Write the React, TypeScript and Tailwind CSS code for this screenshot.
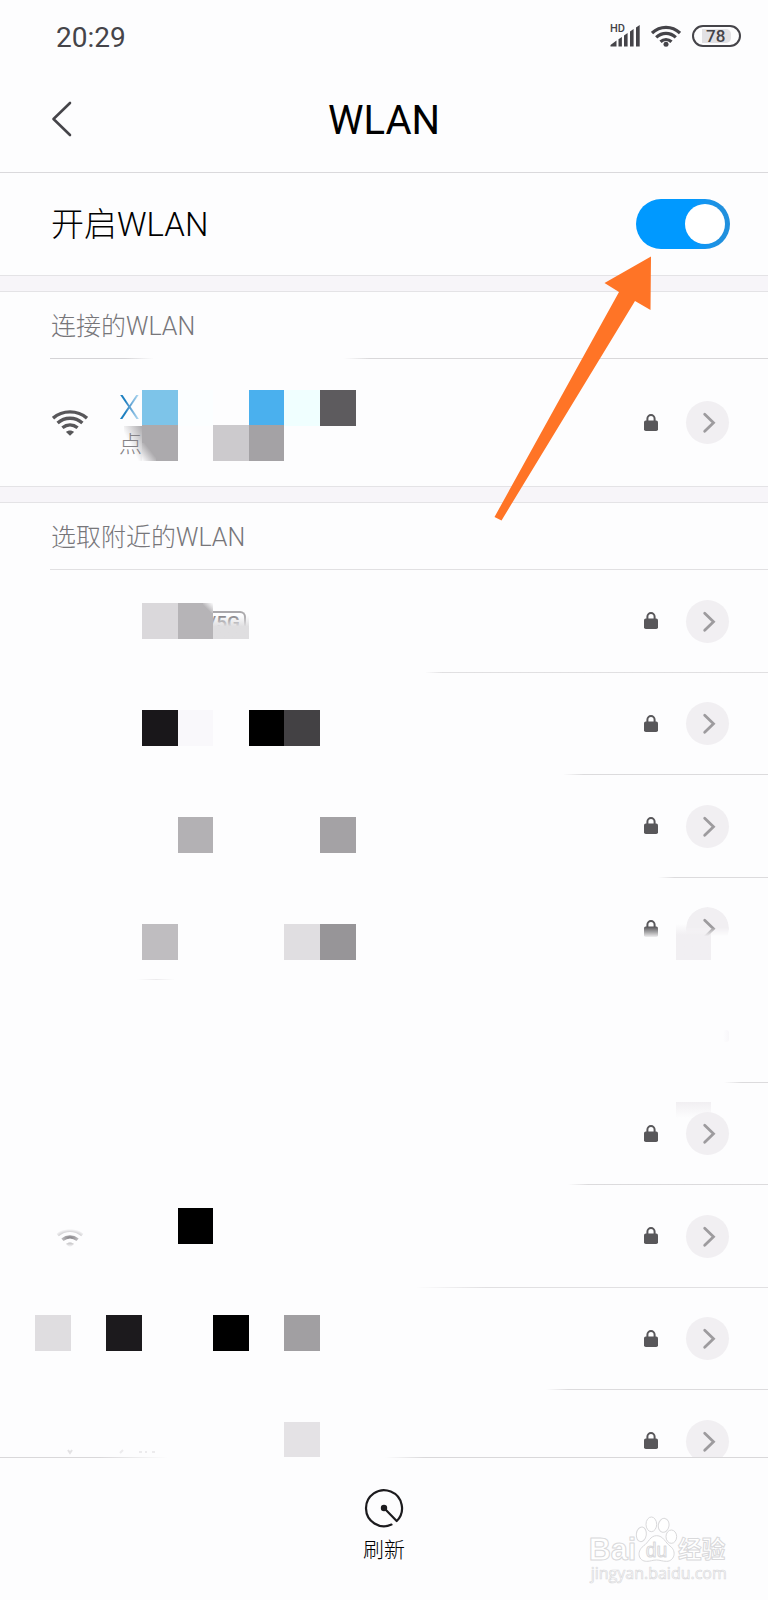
import React, { useState } from "react";

type Cell = [col: number, color: string];

type Network = {
  lineClass: string;
  mosaicTop?: string;
  cells?: Cell[];
  locked: boolean;
  faded?: boolean;
  extra?: React.ReactNode;
};

const CELL = 35.6;

/* A strip of privacy blocks laid over a network's name. */
function Mosaic({ cells, topClass }: { cells: Cell[]; topClass: string }) {
  return (
    <svg
      className={`pointer-events-none absolute left-[35px] ${topClass}`}
      width="680"
      height="36"
      shapeRendering="crispEdges"
      aria-hidden="true"
    >
      {cells.map(([col, color]) => {
        const x = Math.round(col * CELL + 0.2);
        const end = Math.round((col + 1) * CELL + 0.2);
        return <rect key={col} x={x} y="0" width={end - x} height="36" fill={color} />;
      })}
    </svg>
  );
}

function WifiIcon({ className, color = "#58575a" }: { className?: string; color?: string }) {
  return (
    <svg className={className} width="36" height="26" viewBox="0 0 36 26" fill="none" aria-hidden="true">
      <g stroke={color} strokeWidth="3.4">
        <path d="M1 8.2C10.5 -.2 25.5 -.2 35 8.2" />
        <path d="M5.6 13C12.8 6.6 23.2 6.6 30.4 13" />
        <path d="M10.4 17.8C15 14 21 14 25.600 17.8" />
      </g>
      <path d="M14 22C16 20 20 20 22 22L18 25.8Z" fill={color} />
    </svg>
  );
}

function LockIcon({ faded }: { faded?: boolean }) {
  return (
    <svg
      className={faded ? "[mask-image:linear-gradient(to_bottom,black_38%,transparent_100%)]" : ""}
      width="14"
      height="18"
      viewBox="0 0 14 18"
      aria-hidden="true"
    >
      <path d="M3.400 8V4.800a3.600 3.700 0 0 1 7.200 0V8" fill="none" stroke="#58575a" strokeWidth="2" />
      <rect x="0" y="6.500" width="14" height="10.500" rx="1.800" fill="#58575a" />
    </svg>
  );
}

function DetailButton({ faded }: { faded?: boolean }) {
  return (
    <button
      type="button"
      aria-label="详情"
      className={
        faded
          ? "flex size-[43px] shrink-0 items-center justify-center rounded-full bg-[#f1eff2] [mask-image:linear-gradient(to_bottom,black_48%,transparent_68%)]"
          : "flex size-[43px] shrink-0 items-center justify-center rounded-full bg-[#f1eff2]"
      }
    >
      <svg width="43" height="43" viewBox="0 0 43 43" fill="none" aria-hidden="true">
        <path d="M18.700 13.200L27.500 21.700L18.700 30.200" stroke="#9d9b9e" strokeWidth="2.800" strokeLinecap="round" strokeLinejoin="miter" />
      </svg>
    </button>
  );
}

function Trailing({ faded }: { faded?: boolean }) {
  return (
    <div className="relative ml-auto flex items-center gap-7 pr-[39px]">
      <LockIcon faded={faded} />
      <DetailButton faded={faded} />
    </div>
  );
}

function SectionTitle({ children, lineClass }: { children: React.ReactNode; lineClass: string }) {
  return (
    <>
      <h2 className="flex h-[66px] items-center pt-1 pl-[51px] text-[25px] font-light text-[#77767a]">{children}</h2>
      <div className={`ml-[50px] h-px ${lineClass}`} />
    </>
  );
}

const networks: Network[] = [
  {
    lineClass: "ml-[425px] bg-linear-to-r from-transparent to-[#e1e0e2] to-5%",
    mosaicTop: "top-[33px]",
    cells: [
      [3, "#dad8db"],
      [4, "#b6b4b7"],
    ],
    locked: true,
    extra: (
      <>
        <span className="absolute top-[33px] left-[203px] z-10 h-[10px] w-[10px] bg-linear-to-tr from-transparent from-40% to-[#fdfdfe]" />
        <span className="absolute top-[33px] left-[213px] flex h-9 w-9 overflow-hidden">
          <span className="mt-2 flex h-7 w-[33px] justify-end rounded-tr-md border-t-2 border-r-2 border-[#aaa8ab] pr-1 text-[19px] leading-5 font-medium whitespace-nowrap text-[#858387]">
            /5G
          </span>
          <span className="absolute inset-0 bg-linear-to-b from-transparent from-35% to-[#dfdee0] to-65%" />
        </span>
      </>
    ),
  },
  {
    lineClass: "ml-[563px] bg-linear-to-r from-transparent to-[#dcdbdd] to-10%",
    mosaicTop: "top-[37px]",
    cells: [
      [3, "#19171a"],
      [4, "#f9f8fb"],
      [6, "#000000"],
      [7, "#434144"],
    ],
    locked: true,
  },
  {
    lineClass: "ml-[658px] bg-linear-to-r from-transparent to-[#dcdbdd] to-15%",
    mosaicTop: "top-[42px]",
    cells: [
      [4, "#b3b1b4"],
      [8, "#a4a2a5"],
    ],
    locked: true,
  },
  {
    lineClass: "ml-[137px] w-[38px] bg-linear-to-r from-transparent via-[#ecebed] to-transparent",
    mosaicTop: "top-[46px]",
    cells: [
      [3, "#bfbdc0"],
      [7, "#e0dee1"],
      [8, "#979598"],
    ],
    locked: true,
    faded: true,
    extra: (
      <span className="absolute top-[46px] right-[57px] h-9 w-[35px] bg-linear-to-b from-transparent to-[#f1eff2] to-30%" />
    ),
  },
  {
    lineClass: "ml-[724px] bg-linear-to-r from-transparent to-[#dcdbdd] to-40%",
    locked: false,
    extra: (
      <span className="absolute top-[50px] right-[39px] h-3 w-1.5 rounded-full bg-linear-to-r from-transparent to-[#f8f7fa]" />
    ),
  },
  {
    lineClass: "ml-[568px] bg-linear-to-r from-transparent to-[#dcdbdd] to-10%",
    locked: true,
    extra: (
      <span className="absolute top-[19px] right-[57px] h-4 w-[35px] bg-linear-to-b from-[#f1eff2] to-transparent" />
    ),
  },
  {
    lineClass: "ml-[415px] bg-linear-to-r from-transparent to-[#e1e0e2] to-20%",
    mosaicTop: "top-[23px]",
    cells: [[4, "#000000"]],
    locked: true,
    extra: (
      <WifiIcon
        color="#8e8c90"
        className="absolute top-[37px] left-[52px] [mask-image:radial-gradient(ellipse_17px_9px_at_18px_16px,black_10%,transparent)]"
      />
    ),
  },
  {
    lineClass: "ml-[546px] bg-linear-to-r from-transparent to-[#dcdbdd] to-10%",
    mosaicTop: "top-[27px]",
    cells: [
      [0, "#dfdde0"],
      [2, "#1c1a1d"],
      [5, "#000000"],
      [7, "#a19fa2"],
    ],
    locked: true,
  },
  {
    lineClass: "bg-transparent",
    mosaicTop: "top-[32px]",
    cells: [[7, "#e4e2e5"]],
    locked: true,
    extra: (
      <svg className="absolute top-[58px] left-[64px]" width="100" height="8" fill="none" aria-hidden="true">
        <path d="M4 2l2 3 2-3" stroke="#e3e2e4" strokeWidth="2" />
        <path d="M56 5l3-3M75 4h3M81 4h2M88 4h3" stroke="#ecebed" strokeWidth="2" />
      </svg>
    ),
  },
];

function NetworkRow({ network }: { network: Network }) {
  return (
    <li className="relative flex shrink-0 flex-col odd:h-[103px] even:h-[102px]">
      {network.cells && network.mosaicTop && <Mosaic cells={network.cells} topClass={network.mosaicTop} />}
      {network.extra}
      <div className="flex flex-1 items-center">{network.locked && <Trailing faded={network.faded} />}</div>
      <div className={`h-px ${network.lineClass}`} />
    </li>
  );
}

function StatusBar() {
  return (
    <div className="flex h-[72px] shrink-0 items-center justify-between pr-[27px] pl-14 text-[#454449]">
      <span className="pt-1 text-[28px] leading-8">20:29</span>
      <div className="flex items-center gap-[11px]">
        <div className="relative h-[22px] w-[30px]">
          <span className="absolute top-0 left-0 text-[11px] leading-[8px] font-medium">HD</span>
          <svg width="30" height="22" viewBox="0 0 30 22" fill="#454449" aria-hidden="true">
            <path d="M.5 21.500V20L6.500 15.500V21.500ZM8.500 21.500V14.200L11.900 12V21.500ZM14 21.500V10.500L17.600 8V21.500ZM20 21.500V6.500L23.600 4V21.500ZM26 21.500V2.500L29.700 0V21.500Z" />
          </svg>
        </div>
        <svg width="30" height="22" viewBox="0 0 30 22" fill="none" aria-hidden="true">
          <g stroke="#454449" strokeWidth="3.200">
            <path d="M1 8C9 .4 21 .4 29 8" />
            <path d="M5.200 12.400C11 7 19 7 24.800 12.400" />
            <path d="M9.500 16.700C12.700 13.800 17.300 13.800 20.500 16.700" />
          </g>
          <circle cx="15" cy="19.300" r="2.500" fill="#454449" />
        </svg>
        <div className="flex h-[22px] w-[49px] items-center justify-center rounded-[11px] border-2 border-[#454449]">
          <span className="flex h-[14px] w-[29px] items-center rounded-r-[5px] bg-[#e2e1e4] pl-1 text-[17px] leading-[14px] font-medium">
            78
          </span>
        </div>
      </div>
    </div>
  );
}

function Watermark() {
  return (
    <svg
      className="pointer-events-none absolute right-0 bottom-0"
      width="198"
      height="110"
      viewBox="0 0 594 330"
      fill="#ffffff"
      stroke="#d9d9db"
      strokeWidth="3"
      strokeLinejoin="round"
      role="img"
      aria-label="Baidu 经验"
    >
      <text x="56" y="211" fontSize="92" fontWeight="700" fontFamily="'Liberation Sans', sans-serif">Bai</text>
      <ellipse cx="214" cy="133" rx="15" ry="22" transform="rotate(8 214 133)" />
      <ellipse cx="244" cy="103" rx="16" ry="22" />
      <ellipse cx="281" cy="106" rx="16" ry="21" transform="rotate(10 281 106)" />
      <ellipse cx="304" cy="140" rx="16" ry="20" />
      <path d="M260 137C280 137 286 158 300 168C322 184 312 214 290 214C276 214 270 210 260 210C248 210 242 214 230 214C206 214 198 186 220 168C236 158 240 137 260 137Z" />
      <text x="227" y="202" fontSize="58" fontFamily="'Liberation Sans', sans-serif">du</text>
      <text x="324" y="205" fontSize="71" fontWeight="700" fontFamily="'Noto Sans CJK SC', sans-serif">经验</text>
      <text x="62" y="266" fontSize="48" strokeWidth="2" fontFamily="'Open Sans', sans-serif">jingyan.baidu.com</text>
    </svg>
  );
}

export default function App() {
  const [enabled, setEnabled] = useState(true);

  return (
    <div className="relative flex h-screen flex-col overflow-hidden bg-[#fdfdfe] font-['Roboto','Noto_Sans_CJK_SC',sans-serif] text-black">
      <StatusBar />

      <header className="grid h-[101px] shrink-0 grid-cols-[1fr_auto_1fr] items-center border-b border-[#dad9dc] pb-0.5">
        <button type="button" aria-label="返回" className="ml-[50px] w-6 pb-1">
          <svg width="24" height="36" viewBox="0 0 24 36" fill="none" aria-hidden="true">
            <path d="M20 2L3.500 18L20 34" stroke="#454449" strokeWidth="2.600" strokeLinecap="round" strokeLinejoin="round" />
          </svg>
        </button>
        <h1 className="text-[40px] leading-[48px]">WLAN</h1>
      </header>

      <main className="flex min-h-0 flex-1 flex-col overflow-hidden">
        <label className="flex h-[102px] shrink-0 items-center justify-between pr-[38px] pl-[51px]">
          <span className="pt-0.5 text-[33px] font-light">开启WLAN</span>
          <input
            type="checkbox"
            role="switch"
            checked={enabled}
            onChange={(e) => setEnabled(e.target.checked)}
            className="relative h-[50px] w-[94px] appearance-none rounded-full bg-[#d4d3d6] before:absolute before:top-[5px] before:left-[5px] before:size-10 before:rounded-full before:bg-white checked:bg-linear-to-r checked:from-[#0099ff] checked:from-60% checked:to-[#2090de] checked:to-90% checked:before:left-[49px]"
          />
        </label>

        <div className="h-[17px] shrink-0 border-y border-[#e4e3e6] bg-[#f7f5f9]" />

        <section className="shrink-0">
          <SectionTitle lineClass="bg-[linear-gradient(to_right,#d4d3d6_75px,transparent_104px,transparent_294px,#d9d8da_320px)]">
            连接的WLAN
          </SectionTitle>
          <div className="relative flex h-[127px] items-center pl-[52px]">
            <WifiIcon />
            <div className="ml-[31px] flex flex-col items-start gap-1 pt-1">
              <span className="bg-linear-to-r from-[#1c7fc0] from-30% to-[#bfe3f5] bg-clip-text text-[34px] leading-9 font-light text-transparent">
                X
              </span>
              <span className="relative z-10 text-[23px] leading-8 font-light text-[#858387]">点</span>
            </div>
            <span className="absolute top-[67px] left-[124px] h-[35px] w-[18px] bg-linear-to-tr from-transparent from-40% to-[#acaaad]" />
            <Mosaic
              topClass="top-[31px]"
              cells={[
                [3, "#7dc4e9"],
                [4, "#fbfeff"],
                [6, "#4ab0ee"],
                [7, "#f0ffff"],
                [8, "#5d5b5e"],
              ]}
            />
            <Mosaic
              topClass="top-[66px]"
              cells={[
                [3, "#acaaad"],
                [5, "#cccacd"],
                [6, "#a4a2a5"],
              ]}
            />
            <span className="absolute top-[84px] left-[142px] h-[18px] w-[14px] bg-linear-to-bl from-transparent from-40% to-[#fdfdfe]" />
            <Trailing />
          </div>
        </section>

        <div className="h-[17px] shrink-0 border-y border-[#e4e3e6] bg-[#f7f5f9]" />

        <section className="shrink-0">
          <SectionTitle lineClass="bg-[#e1e0e2]">选取附近的WLAN</SectionTitle>
          <ul className="flex flex-col">
            {networks.map((network, index) => (
              <NetworkRow key={index} network={network} />
            ))}
          </ul>
        </section>
      </main>

      <footer className="flex h-[143px] shrink-0 flex-col">
        <div className="h-px bg-[linear-gradient(to_right,#d9d8da_100px,transparent_168px,transparent_385px,#d9d8da_425px)]" />
        <button type="button" className="mx-auto mt-[30px] flex flex-col items-center gap-1.5 text-[21px] font-light">
          <svg width="40" height="40" viewBox="0 0 40 40" fill="none" aria-hidden="true">
            <path
              d="M27.500 36.600A18 18 0 1 1 32.700 33L20 20"
              stroke="#1c1b1e"
              strokeWidth="2.200"
              strokeLinecap="round"
              strokeLinejoin="round"
            />
            <circle cx="20" cy="20" r="3.200" fill="#1c1b1e" />
          </svg>
          <span className="leading-8">刷新</span>
        </button>
      </footer>

      <Watermark />

      <svg
        className="pointer-events-none absolute top-[250px] right-[108px]"
        width="170"
        height="280"
        viewBox="490 250 170 280"
        aria-hidden="true"
      >
        <path d="M651 256.500L604.500 283L619 292L494.500 517L501.500 520.500L635 301L650.500 310Z" fill="#ff7426" />
      </svg>
    </div>
  );
}
